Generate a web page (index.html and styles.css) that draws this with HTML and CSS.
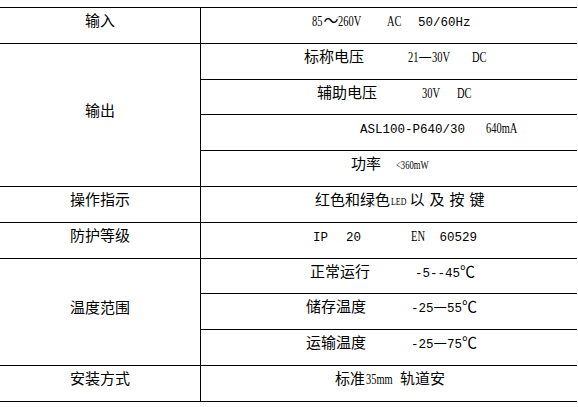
FILE: index.html
```html
<!DOCTYPE html>
<html lang="zh-CN">
<head>
<meta charset="utf-8">
<title>技术参数</title>
<link rel="stylesheet" href="styles.css">
</head>
<body>
<div class="spec">
  <div class="key">输入</div>
  <div class="val r1"><span class="nar">85</span><span class="cn m-3">～</span><span class="nar m-1">260V</span><span class="nar m17">AC</span><span class="mono m11">50/60Hz</span></div>

  <div class="key span4">输出</div>
  <div class="val r2"><span class="cn">标称电压</span><span class="nar m44">21</span><span class="cn m-4">—</span><span class="nar">30V</span><span class="nar m15">DC</span></div>
  <div class="val r3"><span class="cn">辅助电压</span><span class="nar m45">30V</span><span class="nar m10">DC</span></div>
  <div class="val r4"><span class="mono">ASL100-P640/30</span><span class="nar m21">640mA</span></div>
  <div class="val r5"><span class="cn">功率</span><span class="nar sm m15">&lt;360mW</span></div>

  <div class="key">操作指示</div>
  <div class="val r6"><span class="cn">红色和绿色</span><span class="nar xs m1">LED</span><span class="cn wide m-3">以及按键</span></div>

  <div class="key">防护等级</div>
  <div class="val r7"><span class="mono">IP</span><span class="mono m18">20</span><span class="nar m50">EN</span><span class="mono m9">60529</span></div>

  <div class="key span3">温度范围</div>
  <div class="val r8"><span class="cn">正常运行</span><span class="mono m45">-5--45</span><span class="cn">℃</span></div>
  <div class="val r9"><span class="cn">储存温度</span><span class="mono m45">-25</span><span class="cn">—</span><span class="mono">55</span><span class="cn">℃</span></div>
  <div class="val r9"><span class="cn">运输温度</span><span class="mono m45">-25</span><span class="cn">—</span><span class="mono">75</span><span class="cn">℃</span></div>

  <div class="key">安装方式</div>
  <div class="val r11"><span class="cn">标准</span><span class="nar m1">35mm</span><span class="cn m-3">轨道安</span></div>
</div>
</body>
</html>
```

FILE: styles.css
```css
html, body {
  margin: 0;
  padding: 0;
  background: #fff;
}
body {
  padding-top: 7px;
  color: #000;
  font-family: "Noto Sans CJK SC", "Liberation Sans", sans-serif;
  font-size: 15px;
}
.spec {
  width: 577px;
  display: grid;
  grid-template-columns: 201px 1fr;
  grid-template-rows: 36px 36px 35px 36px 36px 36px 36px 35px 36px 36px 36px;
  border-top: 1px solid #000;
}
.key, .val {
  box-sizing: border-box;
  border-bottom: 1px solid #000;
  white-space: nowrap;
  line-height: 20px;
  font-family: "Noto Sans CJK SC", sans-serif;
  font-size: 15px;
}
.key {
  grid-column: 1;
  display: flex;
  align-items: center;
  justify-content: center;
  padding-bottom: 11px;
  border-right: 1px solid #000;
}
.span4 { grid-row: span 4; }
.span3 { grid-row: span 3; }
.val {
  grid-column: 2;
  display: block;
  padding-top: 2px;
}
.val > span {
  display: inline-block;
  vertical-align: baseline;
}
.cn {
  font-family: "Noto Sans CJK SC", sans-serif;
  font-size: 15px;
}
.cn.wide { letter-spacing: 5px; }
.mono {
  font-family: "Liberation Mono", "DejaVu Sans Mono", monospace;
  font-size: 12.5px;
}
.nar {
  font-family: "Liberation Serif", serif;
  font-size: 14.5px;
  transform: scaleX(0.72);
  transform-origin: 0 50%;
}
.nar.sm { font-size: 12px; }
.nar.xs { font-size: 11px; }

/* row start offsets (from the column divider) */
.r1 { padding-left: 111px; }
.r2 { padding-left: 103px; }
.r3 { padding-left: 116px; }
.r4 { padding-left: 159px; }
.r5 { padding-left: 150px; }
.r6 { padding-left: 114px; }
.r7 { padding-left: 112px; }
.r8 { padding-left: 109px; }
.r9 { padding-left: 105px; }
.r11 { padding-left: 134px; }

/* spacing between segments */
.m-4 { margin-left: -4px; }
.m-3 { margin-left: -3px; }
.m-1 { margin-left: -1px; }
.m1 { margin-left: 1px; }
.m9 { margin-left: 9px; }
.m10 { margin-left: 10px; }
.m11 { margin-left: 11px; }
.m15 { margin-left: 15px; }
.m17 { margin-left: 17px; }
.m18 { margin-left: 18px; }
.m21 { margin-left: 21px; }
.m44 { margin-left: 44px; }
.m45 { margin-left: 45px; }
.m50 { margin-left: 50px; }
```
